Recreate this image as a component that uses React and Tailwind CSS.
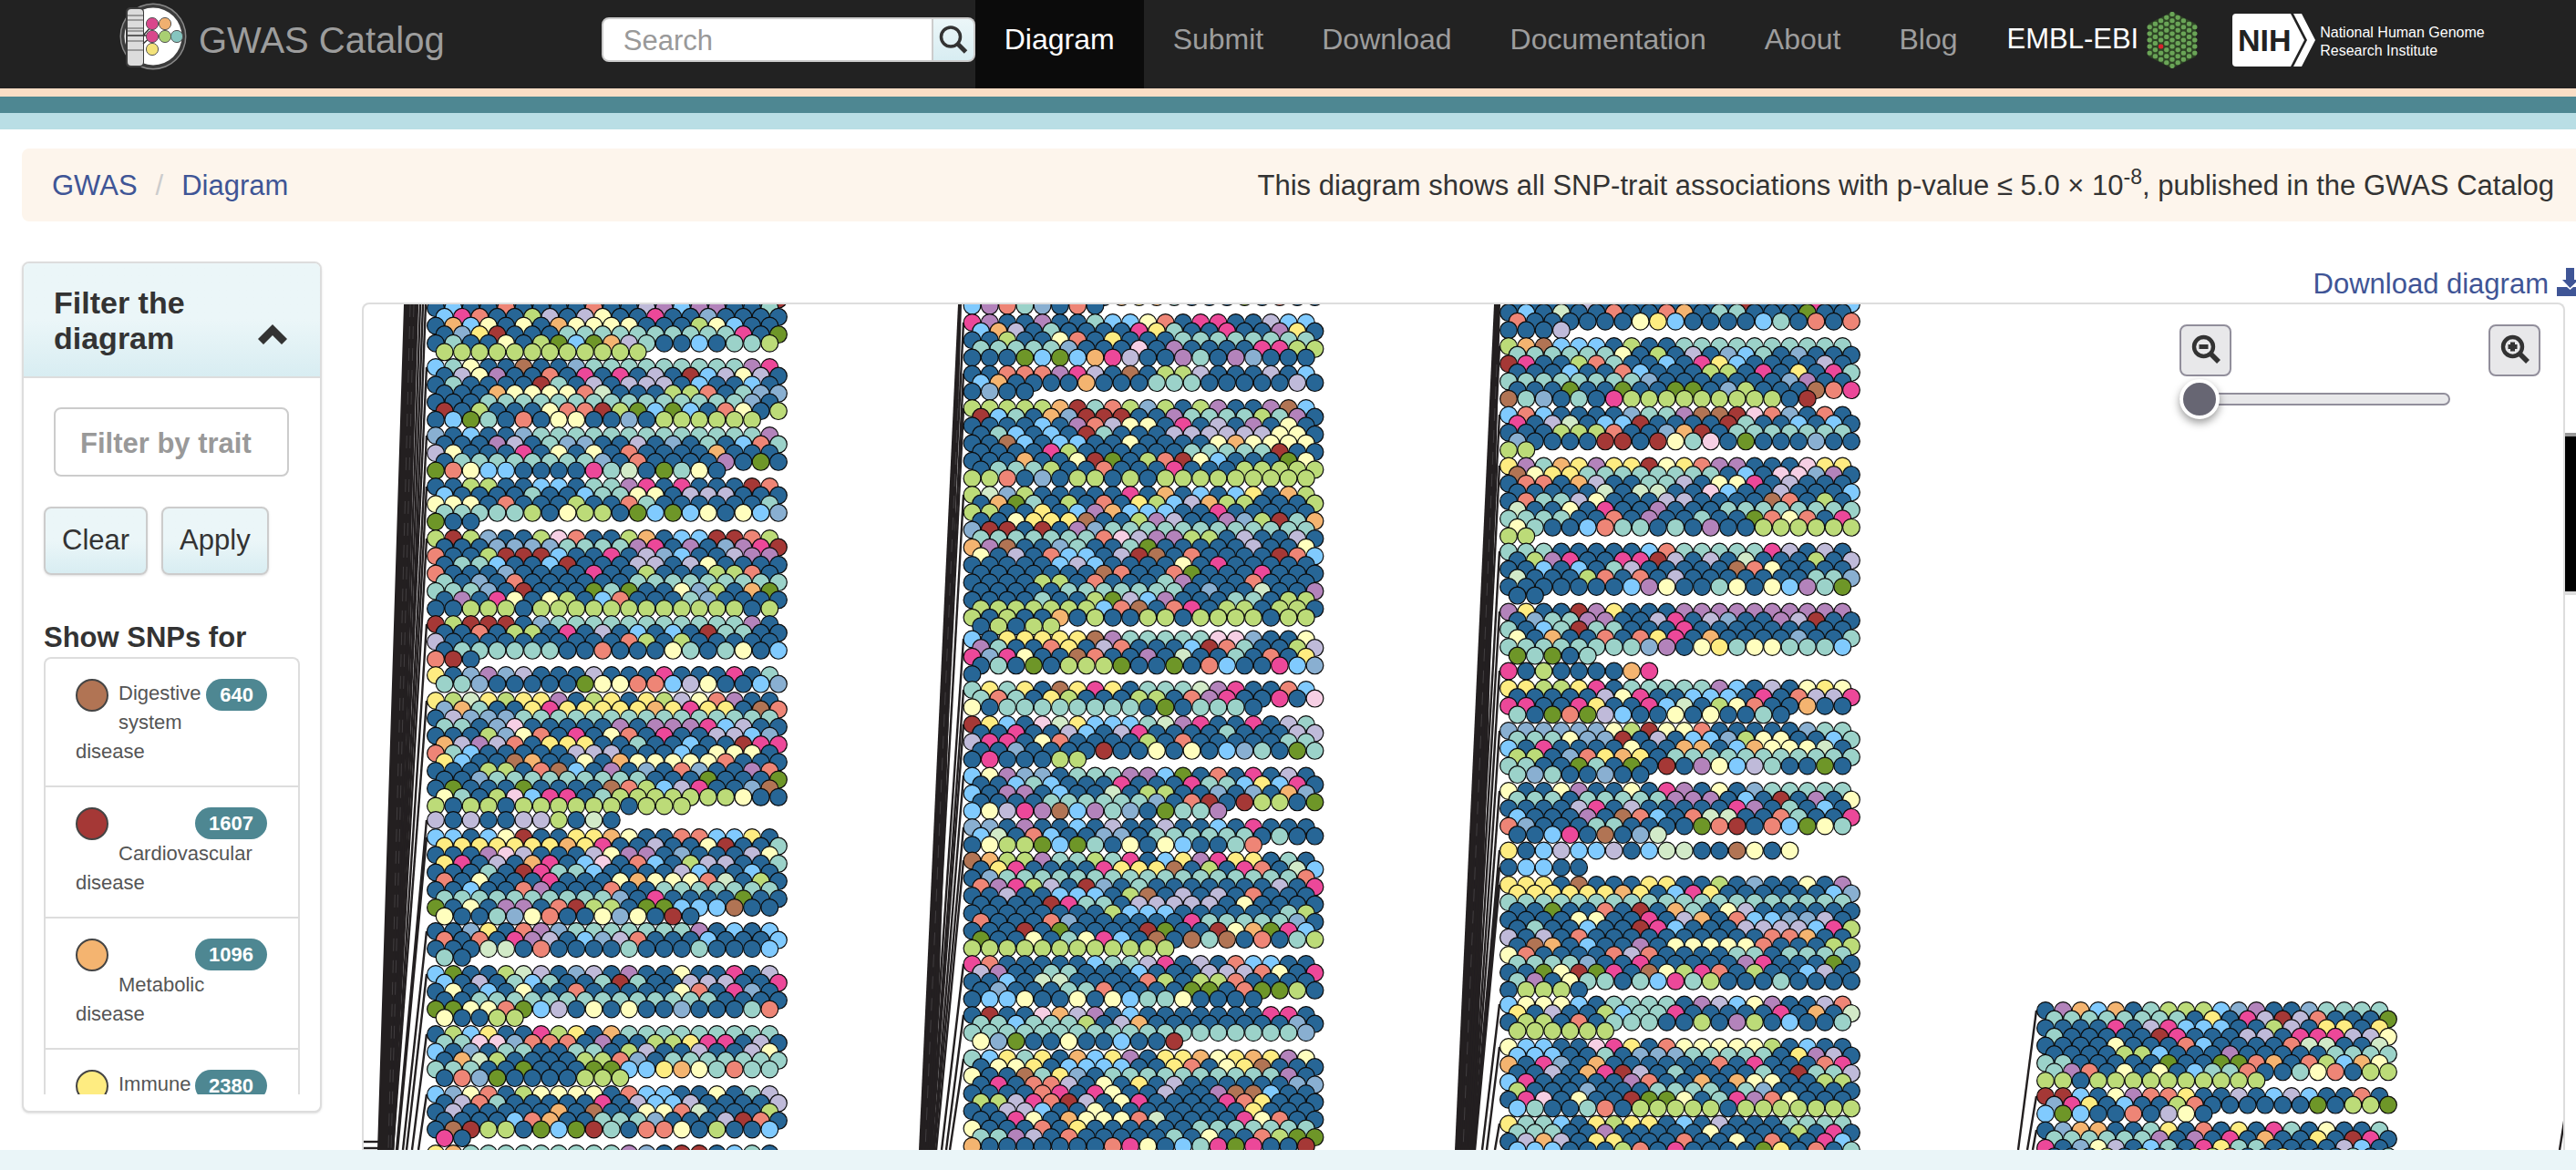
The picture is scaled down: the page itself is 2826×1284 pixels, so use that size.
import React from "react";

const COLORS = {
  b: "#276696", t: "#9bd2c9", l: "#80cafe", s: "#89afd1", y: "#fffebe", Y: "#feec81",
  g: "#bcdb78", G: "#6e9628", r: "#ee8576", R: "#a53836", o: "#f4b470", p: "#ec4899",
  u: "#b383bb", v: "#bfbad9", n: "#b17454", k: "#f6cfe4", c: "#d2eac8",
};

const PITCH_X = 19.28;
const PITCH_Y = 9.62;

// Each group: [centre y of its first row, whether that row is shifted by half a pitch, rows]
const CHROMOSOMES = [
  {
    x: 478,
    groups: [
      [319, 0, "bbbbbbbbbbbbbbbbbbbb bbbbbbbbbbbbbbbbbbbR blbbrbbbbrbbvuluubbt lprbbgvbvybbpbbsbbbb bolybyboyyyybbbgylbb bsYRbbbttttttttttpbG btbbybgGlGovtbblbttg gggggggggggg"],
      [403, 0, "ltybbnbbstttttttttup bvyubbrbpbpbvbRlvyvb btbbbbRtbvbvvvblbblb bbboyyyyrcbbbggrbtss bbbtttttttttttttttsb RbgbbbyrrRgGlGlbrybg blGtbrbyybbsbgggggg"],
      [478, 0, "sblbbstttttttttttttu bbbuvbtssbbvbsbtblrt vybbbpbybybrbbbbobbb bttttttttsbrbbbbubGb GryllbbbbptcbGtyb"],
      [534, 0, "bbggbbllbttupbpbbbRr lbbbbtbblttyybvvvbbb yyybrbbbgbbrtbbbbbbt tttttgbyggbGlGlybyls Gbb"],
      [591, 0, "gRgsbbgkrbbgobllRRrg bbbssssttttupbubsupR rbbgRRRlbbpbvslbbvuu bttlbblRbbbvvbvybbbb rbbbsbbbbpbbgbbbggrb tbsbrbbbbbbttttttttt tttsbRbbbGtGbbysgboG bubpybygblrbbbtsbbbb bbgggbggggggggggggbg"],
      [685, 0, "RgRRRbstttttttttttub bbrbggbpbvblblbRttbb vbbbbbbbbbbrgbgbbbbb bttttttbbrbbbytbtybl rRb"],
      [741, 0, "Ybsusvbbbvbbbpbbbpbt ttsbbbbbGyyrrlvybbls"],
      [769, 0, "YgcYgYYubgYbYgvyrubb sotbbYpYYYYYoYpYYbnr bvsssttttttttttttttt ttbskbbbbbubuuuplvbb bbbgsyrbpbyrbpbbvvls ovuvrbYYYbbtbblbbRpp rtlbbbbbvvvbbblbyyyb YlbbnobbyboyyyyyrbbB bbbggbrnlbubsbrsbbur bbstttttttttbbbGbbbG bGbbbGbbbbnrglvpbbsn ytbgklppbtgggggggybb gbggbggggggbggg"],
      [900, 0, "vbvbbvvgbcb"],
      [919, 0, "llblyRbbYYoybbrrllYb YYYYYYYoYpbbvbbyRbbt bbbukvbbbvyuubsbbbvy Ypbvbopblkbrlbgvvbbt bbbtbRpttlbbbbvlbblb rbybbbpbbbyoyyyrcbgb bblbbrubbbrbbttttttt ttttttttttsbpbbbbGbb GbybuubrRggbGGlllnbb ybbtsyrbbysybRb"],
      [1022, 0, "bbsYbrusttttttTublbl rbrbpuvblsvrbbblbbbl bbbccbrbbbbtbbbtbbbl tb"],
      [1069, 0, "lGbbgcvbsvbubbybbpbv lbvbtltbbtRtbbvvvbbp byblbybbrbbbbbyrbpsb bbttttttttttttttbbbb GGyyrGlvbybybbsbbbtr ybbgg"],
      [1135, 0, "bglYbbpgYbottttttttt ttkksrrrbubbggYppbvb lbsbttbbttbgvbbvbbvy bocgbbbbggrsbttttttt tttbbGbbbGGllYoytrtt brsGbbbbggg"],
      [1201, 0, "lsyrbgyyyybrllbbybtv bvrtbbbbbpbvllvbbbbv bvbbbbbobnbbyyrcbbbg bbbblrobbtttsbbbvRrb bnRggbGlGRtbrrybgbbl pb"],
      [1266, 0, "YottttttttTusbRRbltb"],
    ],
  },
  {
    x: 1066.5,
    groups: [
      [326, 1, "bbbbbbbboYotbbbGbrbb lurtsbrb"],
      [354, 0, "pubbubbtllyrbppbbvll lovbtbbbbpYtbbpbbuYb bbgbbyrbYbbbtttttttt tttttsbbbkbubbbbppgg bbbGlGlopvbbutbusbbb"],
      [410.5, 0, "bbrrrupvbnbggvbbbvbl lobbbbobbbtttbbbbbvb bsbb"],
      [448, 0, "gggggoRtrgsgbgubbunl RltbosRRRbbuttttgtub bbbblburvyybpbvbubyb btlblbRtbbbvvvvvvyyb bbnlbllbbybbbbyoyyyy bbbbpgbbbbbbtttttRbb bbbobbyRGbgrRylbbbGy btttgbbrbbbpbbbggggg ggrbsbggbgbggggggggg"],
      [543, 0, "gcsgbbbbbpboblblYbog boGtbgbrbYglvoggbbbg ggbbYbluolllbbpbbbbb bbyYYYnbbguvbbusgRto sRRbRbustttttttttttt tttttttrkvuuggbvbbvb ounbbstbbtGbbbbbvbby ybvbrllbvRnbrbbbbRrl bbbbblvlbbbbybpbbbbb bbbbbbbnrbbrGbbbpbbb bbbbggbrbbbtubbbrbbb bbbbbtttttttbsbbcbbu bbbbtbbgGvlubbbttbgg ggggggglrnbrpbggbggb gbgbbobgbbggbggggbgg bgbgg"],
      [701.5, 0, "lbYYYYYnutttttkksbby utbbrYbvrbbblRrtbbgv pspybbnrbbubcbbtbrbY btbGbgggGbbGbrlbbpls b"],
      [757, 0, "tYtYbnYpYbtttcupbbrl trtbYgbbbggbrupbbpbk ybttttttttbGbtttb"],
      [795, 0, "RYlbkcYllltcupbbpbvt bbpbbvlbvpbbbbtbbbvv vppbyrbbbbgbrbbbbbtt bbsbbbbRbbybyblstbGt bpbbbgg"],
      [851.5, 0, "lyussbtttuulGbrbpbvb bbltlbbbpbbbpttlYlpb lbuublbbcbggbbsbsbos bbbbttttttsbrRbRggbG lyvpunlutsbGttu"],
      [908, 0, "ssbubblbvbbvbblbpbbb lcbrlbbssbttttttbtbb byggGlGtbybylbbtr"],
      [944.5, 0, "noggutTgtpblYupYYbtb bYpbbbbpYYYnbgbprbcl bstttttttttttttttttr rupgvbRsbtbbbbbbbvbp bbvbblllbgnbvbvbrbbb bbbbRpttbvvvvvbybbbb bbbbbbbbglllbbbbbbtg rbbbrsbbbbbbptttttsb bbbRbGbbbbRGbbRyoGpl Gbbybtyplbnbntnbrbtg gggggggggggg"],
      [1058, 0, "prbbbbblttvpbvbrllbb vubbttbbblbbbvvvrybp bblbccbbbbrgbggrbbbb bsbbbttrbbbbGGbrGGgb bllybbybylttybbbb"],
      [1114, 0, "bRbbkovublbbbbbbbppb ttltttgbvobbbbbbbbsb ttttttttttttttttttts ysGbbybblbbR"],
      [1161.5, 0, "tlYtYbolYubYYoyYoYuy byyYbllllbbYrbyYnbbb ybbntYsbttttttttttub bpbrrvbybYbvbbbbbbss bbbbrpbpybbvbbunnlbb ggvprRvbypbbbbprYbbb bbvvlbbybbbbbbbbYbbb bbpyboyyyrcbbbbpyrbb ybbbrbYbbbbbbttttttt ttuvbrbbbbbtbybbrgGG obbbbbbbrpybltpGpbbR"],
    ],
  },
  {
    x: 1655,
    groups: [
      [333.5, 1, "bbbbvbbbbbbbbRbbbpbl blbcbbrbbrobttbbbGbb rbbbbbbyYlbbbbltbrbr bbbv"],
      [380, 0, "gonlllbgbbtttttttttt ttttttybgbvbsltbsbbb RpbbgrtbblbpYlbbbbvb bbblbbrlbbbggbpbYbpt ttttttttsbbbbbbbsubb bbbGbbGbbGGbsgbbbnrp ntsbtbpgggggggggbR"],
      [455.5, 0, "lrlbbbbsttunnRkrsbrb pbvcbllRbbbbRtbblblb bbbgggrbbsoRbttttttt sbbbbRRbRytkbGbbbsbb gg"],
      [511.5, 0, "YutoYuYYRyYruubbbkYY nyYYttttttttblbkksub brrbovbbttvbyypbvbbb bbbbbcbccbbklbbvbbbl brttvybbbvvbbbbnrbgb cbbybpbbubbbtttttttt ttttbbrbubbtbbGryrbp ytbblrttbtbubbgggggg gg"],
      [605.5, 0, "tttbbbbblrtttttpvbvb bgupbbppRvbvbcbbbgbv bblblbtvbbbbbnrybbbb cbbbgrbrbvbbbbbbbtts bbbbbbbluybbtybylutG bb"],
      [671.5, 0, "uYbbRuYbbbuuuuuuuuuu bsttuubbvpbvsbbuvRbb tbltRttbbbpbbbbbbbbb ybobbrbrYpbobbbbsbbt ttttttttsubyYtyytttl GtGbt"],
      [736.5, 0, "pbgbbbbop"],
      [755.5, 0, "YYggYpbtttttulbvbyYy bbbbbvypbblllbpbrvvp ppbbpYbbplcbgyrbbobb tbGrGvlbbybybbtb"],
      [802, 0, "ssssssygRyyrbbbbbstt tttyssRbvbllsgyybblt lbpbbbbybboobloyyycb ggbsrYoYbttttttttttt ttbbGtbGbRbuylvtbbGb tstbbsbb"],
      [868, 0, "ybbyubbybpubybsttttt tttbtttttuuublbRbuby bbbbvpbvbbbbbpubtblb lbbbubnrlbrccbbrtbbp rsbbbttbbbbGrRbrlGyt bblpbnbsc"],
      [933.5, 0, "Yblvllvblccbbnyby"],
      [952, 0, "bllbb"],
      [971, 0, "YYYbnbbbYYbbgbsbbybu YYYYYYoYblpYbbbbbbls tttttttttttttttttttt bbGbbrbRbotbyvbbbbbb bbbbyybbpbvobrllssvb btbblbbRplbbbvvvvlpg vbvbrbbbbbbbbbbrrobb bnoblbbubyyyyyrbbbgg yrbbbbrvrbbbbttbtttt ttttsbbpbbbbbupbbbGb bbGyRGpbnygprbgbblvb tubyttbtlptgbbbtbbbb bgggb"],
      [1102.5, 0, "lyyylbttttbuvlyubbvr YbvbbglttpbbbbbpbObc bggbrbtttbbgbugblbbt gggggg"],
      [1149, 0, "yllbbkpYbryyyyygblbb lllbbtbssstttttbYuvb obpsbobbbbbbrbpbbbrp bbvbopRvbtbbbbtbRttv lpbbbbburbbobOyybbgg gbbbsbbbttttbtsbbbbb bpkbybbRGGybtpurybbb ltbbtrbgggggbggggggg"],
      [1233.5, 0, "YttlbYgYYblbvbbbtttt tttbbubbbbbybbbbgbpb bvovbYYbbbrbbybrbbpl lllbbbgrbpbbbbGYbrbt"],
    ],
  },
  {
    x: 2244,
    groups: [
      [1109, 0, "buolobtggglsubbstttt ttttttttbYbpvRvrbbbG bbbbpbvplllbbgvbYYbY tbbbbbRpbbbvvbpppvvy bbbbybbbrlbbbbrccbbc bbbbgglbbbubbbbbtttt ttbbbbbGbbGGrobrgloy turbybyblttrbbtyrbgg ggbgggggggggg"],
      [1203, 0, "RRlbyurrYbbvblvlbbrb spYblbbgrbbbbbbGbggG lGlbbrbvyb"],
      [1240.5, 0, "bsoobbtYbrbYbptbybbt ttttttububpbobbYbRpb pbsyvbltbpYttbbbbvlb bbbgbgbbggrbbYbbbtbt"],
    ],
  },
];

// Leader lines joining the chromosome bands to their trait groups: [x1, y1, x2, y2]
const LEADERS = [
  [458, 334, 428, 1262], [461, 334, 429, 1262], [464, 334, 430, 1262], [467, 334, 431, 1262],
  [468, 403, 427, 1262], [468, 478, 428, 1262], [468, 534, 429, 1262], [468, 591, 430, 1262],
  [468, 685, 431, 1262], [468, 769, 431, 1262], [468, 900, 435, 1262], [468, 919, 436, 1262],
  [468, 1022, 442, 1262], [468, 1069, 446, 1262], [468, 1135, 452, 1262], [468, 1201, 459, 1262],
  [1057, 354, 1012, 1262], [1057, 410, 1014, 1262], [1057, 448, 1016, 1262], [1057, 543, 1017, 1262],
  [1057, 701, 1019, 1262], [1057, 757, 1021, 1262], [1057, 795, 1022, 1262], [1057, 851, 1024, 1262],
  [1057, 908, 1025, 1262], [1057, 944, 1027, 1262], [1057, 1058, 1033, 1262], [1057, 1114, 1038, 1262],
  [1057, 1162, 1042, 1262],
  [1645, 380, 1602, 1262], [1645, 455, 1604, 1262], [1645, 511, 1606, 1262], [1645, 605, 1608, 1262],
  [1645, 671, 1610, 1262], [1645, 736, 1612, 1262], [1645, 802, 1614, 1262], [1645, 868, 1615, 1262],
  [1645, 933, 1616, 1262], [1645, 952, 1617, 1262], [1645, 971, 1618, 1262], [1645, 1102, 1626, 1262],
  [1645, 1149, 1631, 1262], [1645, 1233, 1640, 1262],
  [2234, 1109, 2214, 1262], [2234, 1203, 2224, 1262], [2234, 1240, 2230, 1262],
  [2814, 1225, 2808, 1262], [399, 1253, 415, 1253], [399, 1260, 415, 1260],
];

const TRUNKS = [
  "443,334 458,334 432,1262 414,1262",
  "1051,334 1055,334 1044,700 1024,1262 1008,1262",
  "1639,334 1646,334 1636,700 1618,1262 1596,1262",
];

const SLITS = [
  [450, 334, 426, 1262], [454, 334, 429, 1262],
  [1053, 400, 1015, 1262], [1642, 400, 1605, 1262],
];

function Association({ cx, cy, code }) {
  return <circle cx={cx} cy={cy} r="9.4" fill={COLORS[code] || COLORS[code.toLowerCase()]} />;
}

function Diagram() {
  return (
    <svg viewBox="399 334 2413 928" className="block h-auto w-full" role="img" aria-label="GWAS diagram">
      {TRUNKS.map((points) => (
        <polygon key={points} points={points} fill="#231f20" />
      ))}
      <g stroke="#231f20" strokeWidth="2.4">
        {LEADERS.map(([x1, y1, x2, y2], i) => (
          <line key={i} x1={x1} y1={y1} x2={x2} y2={y2} />
        ))}
      </g>
      <g stroke="#6f6d6e" strokeWidth="0.4" strokeDasharray="14 10">
        {SLITS.map(([x1, y1, x2, y2], i) => (
          <line key={i} x1={x1} y1={y1} x2={x2} y2={y2} />
        ))}
      </g>
      <g stroke="#0b0b0b" strokeWidth="1.2">
        {CHROMOSOMES.map((chromosome) =>
          chromosome.groups.map(([top, shift, rows]) =>
            rows.split(" ").map((row, r) =>
              row.split("").map((code, i) => (
                <Association
                  key={`${chromosome.x}-${top}-${r}-${i}`}
                  cx={chromosome.x + PITCH_X * (i + ((r + shift) % 2) / 2)}
                  cy={top + PITCH_Y * r}
                  code={code}
                />
              ))
            )
          )
        )}
      </g>
    </svg>
  );
}

function GwasLogo() {
  const dots = [
    [37, 24, "#d9478c"], [51, 24, "#f0b070"], [37, 38, "#d9478c"],
    [51, 38, "#a9cf72"], [64, 38, "#86c5bf"], [37, 52, "#f3e27a"],
  ];
  return (
    <svg viewBox="0 0 76 76" className="size-[76px]" aria-hidden="true">
      <circle cx="38" cy="38" r="36.5" fill="#8a8a8a" />
      <circle cx="38" cy="38" r="35" fill="#3c3c3c" />
      <circle cx="38" cy="38" r="31.5" fill="#fff" />
      <rect x="8" y="6" width="20" height="66" rx="5" fill="#3c3c3c" />
      <rect x="10" y="8" width="17" height="62" rx="4" fill="#dcdcdc" />
      <path d="M10 15h17M10 20h17M10 29h17M10 32h17M10 43h17M10 53h17" stroke="#9a9a9a" strokeWidth="2" />
      <path d="M10 37h17L37 26M27 37h10L27 46" stroke="#333" strokeWidth="1.5" fill="none" />
      {dots.map(([x, y, fill]) => (
        <circle key={`${x}-${y}`} cx={x} cy={y} r="6.6" fill={fill} stroke="#555" strokeWidth="1" />
      ))}
    </svg>
  );
}

function EmblMark() {
  const cells = [];
  for (let c = -4; c <= 4; c += 1) {
    const count = 9 - Math.abs(c);
    for (let i = 0; i < count; i += 1) {
      cells.push([28 + c * 6.2, 32 + (i - (count - 1) / 2) * 7.1, c, i]);
    }
  }
  return (
    <svg viewBox="0 0 56 64" className="h-16 w-14" aria-hidden="true">
      <path d="M28 1L54 14V50L28 63L2 50V14Z" fill="#2f4526" />
      {cells.map(([x, y, c, i]) => (
        <rect
          key={`${c}-${i}`}
          x={x - 2.6}
          y={y - 2.5}
          width="5.2"
          height="5"
          rx="1.8"
          fill={c === -2 && i === 4 ? "#d9232e" : "#6aa557"}
        />
      ))}
    </svg>
  );
}

function NihMark() {
  return (
    <svg viewBox="0 0 92 58" className="h-[58px] w-[92px]" aria-hidden="true">
      <path d="M4 0H64L79 29L64 58H4Q0 58 0 54V4Q0 0 4 0Z" fill="#fff" />
      <path d="M67 0H76L91 29L76 58H67L82 29Z" fill="#fff" />
      <text x="6" y="41" fontFamily="Liberation Sans, sans-serif" fontWeight="700" fontSize="34" fill="#222">
        NIH
      </text>
    </svg>
  );
}

function SearchGlyph() {
  return (
    <svg viewBox="0 0 32 32" className="size-8" aria-hidden="true">
      <circle cx="13" cy="12.5" r="10.5" fill="none" stroke="#333" strokeWidth="3.5" />
      <path d="M20.5 20L29.5 29" stroke="#333" strokeWidth="5" />
    </svg>
  );
}

function ZoomGlyph({ plus }) {
  return (
    <svg viewBox="0 0 32 32" className="mb-1 size-8" aria-hidden="true">
      <circle cx="13.5" cy="13.5" r="10.5" fill="none" stroke="#333" strokeWidth="4.4" />
      <path d="M22 22L30 30" stroke="#333" strokeWidth="5.5" />
      <path d={plus ? "M8.5 13.5h10M13.5 8.5v10" : "M8.5 13.5h10"} stroke="#333" strokeWidth="5" />
    </svg>
  );
}

const NAV = ["Diagram", "Submit", "Download", "Documentation", "About", "Blog"];

function Header() {
  return (
    <header>
      <div className="flex h-[97px] items-start overflow-hidden bg-[#222] pl-[130px] whitespace-nowrap text-[#9d9d9d]">
        <a href="#home" className="flex h-[87px] items-center gap-3">
          <span className="mb-2">
            <GwasLogo />
          </span>
          <span className="text-[40px]">GWAS Catalog</span>
        </a>
        <form className="mt-[19px] ml-[172px] flex h-[49px]" onSubmit={(e) => e.preventDefault()}>
          <input
            type="search"
            aria-label="Search"
            placeholder="Search"
            className="w-[364px] rounded-l-lg border-2 border-[#ccc] bg-white px-[22px] pt-1 text-[31px] text-[#555] outline-none placeholder:text-[#999]"
          />
          <button
            type="submit"
            aria-label="Run search"
            className="flex w-[46px] items-center justify-center rounded-r-lg border-2 border-l-0 border-[#ccc] bg-linear-to-b from-[#ebf6f8] to-[#d8edf2]"
          >
            <SearchGlyph />
          </button>
        </form>
        <nav className="flex h-full">
          {NAV.map((item, i) => (
            <a
              key={item}
              href={`#${item.toLowerCase()}`}
              className={
                i === 0
                  ? "flex items-center bg-[#0b0b0b] px-8 pb-3 text-[32px] text-white"
                  : "flex items-center px-8 pb-3 text-[32px]"
              }
            >
              {item}
            </a>
          ))}
        </nav>
        <a href="#embl-ebi" className="ml-[22px] flex h-[87px] items-center gap-[9px] text-[31px] text-white">
          EMBL-EBI
          <EmblMark />
        </a>
        <a href="#nih" className="ml-[38px] flex h-[88px] items-center gap-1 text-base leading-5 text-white">
          <NihMark />
          <span className="mt-1">
            National Human Genome
            <br />
            Research Institute
          </span>
        </a>
      </div>
      <div className="h-[9px] bg-[#fadec6]" />
      <div className="h-[18px] bg-[#4e8792]" />
      <div className="h-[18px] bg-[#b9dee5]" />
    </header>
  );
}

const TRAITS = [
  { lines: ["Digestive", "system", "disease"], count: 640, color: "#b17454" },
  { lines: ["Cardiovascular", "disease"], count: 1607, color: "#a53836" },
  { lines: ["Metabolic", "disease"], count: 1096, color: "#f4b470" },
  { lines: ["Immune"], count: 2380, color: "#feec81" },
];

function Trait({ lines, count, color }) {
  return (
    <li className="border-b-2 border-[#ddd] pt-[22px] pr-[34px] pb-[21px] pl-[33px] text-[22px] leading-8 text-[#555]">
      <svg viewBox="0 0 47 56" className="float-left h-14 w-[47px]" aria-hidden="true">
        <circle cx="18" cy="18" r="17" fill={color} stroke="#444" strokeWidth="2" />
      </svg>
      <span className="float-right h-[35px] rounded-full bg-[#4e8792] px-[15px] leading-[36px] font-bold text-white">
        {count}
      </span>
      {lines.map((line, i) => (
        <React.Fragment key={line}>
          {i > 0 && <br />}
          {line}
        </React.Fragment>
      ))}
    </li>
  );
}

const BUTTON =
  "h-[75px] rounded-lg border-2 border-[#ccc] bg-linear-to-b from-[#ebf6f8] from-50% to-[#d8edf2] px-[18px] text-[31px] shadow-sm";

function Sidebar() {
  return (
    <aside className="mt-11 w-[329px] shrink-0 self-start rounded-lg border-2 border-[#ddd] bg-white pb-[18px] shadow-sm">
      <div className="flex items-end justify-between rounded-t-md border-b-2 border-[#ddd] bg-linear-to-b from-[#ebf6f8] from-50% to-[#d8edf2] pt-6 pr-9 pb-[22px] pl-[33px]">
        <h2 className="w-44 text-[34px] leading-[39px] font-bold">Filter the diagram</h2>
        <button type="button" aria-label="Collapse filter" className="mb-[13px]">
          <svg viewBox="0 0 32 22" className="h-[22px] w-8" aria-hidden="true">
            <path d="M0 16L16 0L32 16L26 22L16 12L6 22Z" fill="#333" />
          </svg>
        </button>
      </div>
      <div className="px-[22px] pt-8">
        <input
          type="text"
          aria-label="Filter by trait"
          placeholder="Filter by trait"
          className="ml-[11px] h-[76px] w-[258px] rounded-lg border-2 border-[#ccc] px-[27px] pt-1 text-[31px] font-bold outline-none placeholder:text-[#999]"
        />
        <div className="mt-[33px] flex gap-[15px]">
          <button type="button" className={BUTTON}>
            Clear
          </button>
          <button type="button" className={BUTTON}>
            Apply
          </button>
        </div>
        <h3 className="mt-12 text-[31px] leading-[42px] font-bold">Show SNPs for</h3>
        <ul className="h-[480px] overflow-hidden rounded-t-lg border-2 border-b-0 border-[#ddd]">
          {TRAITS.map((trait) => (
            <Trait key={trait.count} {...trait} />
          ))}
        </ul>
      </div>
    </aside>
  );
}

const ZOOM_BUTTON =
  "flex size-[57px] items-center justify-center rounded-lg border-2 border-[#918e9b] bg-[#e8e8ea]";

function ZoomControls() {
  return (
    <div className="absolute top-[22px] right-[25px] w-[396px]">
      <div className="flex justify-between">
        <button type="button" aria-label="Zoom out" className={ZOOM_BUTTON}>
          <ZoomGlyph />
        </button>
        <button type="button" aria-label="Zoom in" className={ZOOM_BUTTON}>
          <ZoomGlyph plus />
        </button>
      </div>
      <input
        type="range"
        min="0"
        max="100"
        defaultValue="0"
        aria-label="Zoom level"
        className="mt-[18px] block h-[14px] w-[297px] appearance-none rounded-full border-2 border-[#918e9b] bg-[#e8e8ea] [&::-webkit-slider-thumb]:-ml-0.5 [&::-webkit-slider-thumb]:size-11 [&::-webkit-slider-thumb]:appearance-none [&::-webkit-slider-thumb]:rounded-full [&::-webkit-slider-thumb]:border-4 [&::-webkit-slider-thumb]:border-white [&::-webkit-slider-thumb]:bg-[#676673] [&::-webkit-slider-thumb]:shadow-[0_4px_10px_rgba(0,0,0,0.4)]"
      />
    </div>
  );
}

export default function App() {
  return (
    <div className="relative flex min-h-screen flex-col overflow-hidden bg-white font-['Liberation_Sans',Arial,sans-serif] text-[#333]">
      <Header />
      <div className="mt-[21px] ml-6 flex h-20 items-center justify-between rounded-l-lg bg-[#fdf5ec] pt-0.5 pr-6 pl-[33px] text-[31px] whitespace-nowrap">
        <nav aria-label="Breadcrumb" className="flex gap-5 text-[#3f5596]">
          <a href="#gwas">GWAS</a>
          <span className="text-[#ccc]">/</span>
          <a href="#diagram">Diagram</a>
        </nav>
        <p>
          This diagram shows all SNP-trait associations with p-value ≤ 5.0 × 10
          <sup className="text-[23px]">-8</sup>, published in the GWAS Catalog
        </p>
      </div>
      <main className="flex gap-11 pr-3 pl-6">
        <Sidebar />
        <section className="min-w-0 flex-1">
          <div className="flex h-[89px] items-end justify-end pb-0.5">
            <a href="#download" className="-mr-6 flex items-center gap-[9px] text-[31px] leading-[36px] text-[#3f5596]">
              Download diagram
              <svg viewBox="0 0 33 32" className="mb-1 h-8 w-[33px]" aria-hidden="true">
                <path d="M10 0H19V13H24L14.5 22L6 13H10Z" fill="#3f5596" />
                <path d="M0 21H11L14.5 24L18 21H33V31H0Z" fill="#3f5596" />
              </svg>
            </a>
          </div>
          <div className="relative overflow-hidden rounded-t-lg border-2 border-b-0 border-[#ddd]">
            <Diagram />
            <ZoomControls />
          </div>
        </section>
      </main>
      <footer className="min-h-[22px] flex-1 bg-[#eaf5f8]" />
      <button
        type="button"
        aria-label="Feedback"
        className="absolute top-[475px] right-0 h-[178px] w-3 border-y-4 border-t-[#999] border-b-[#ddd] bg-black"
      />
    </div>
  );
}
